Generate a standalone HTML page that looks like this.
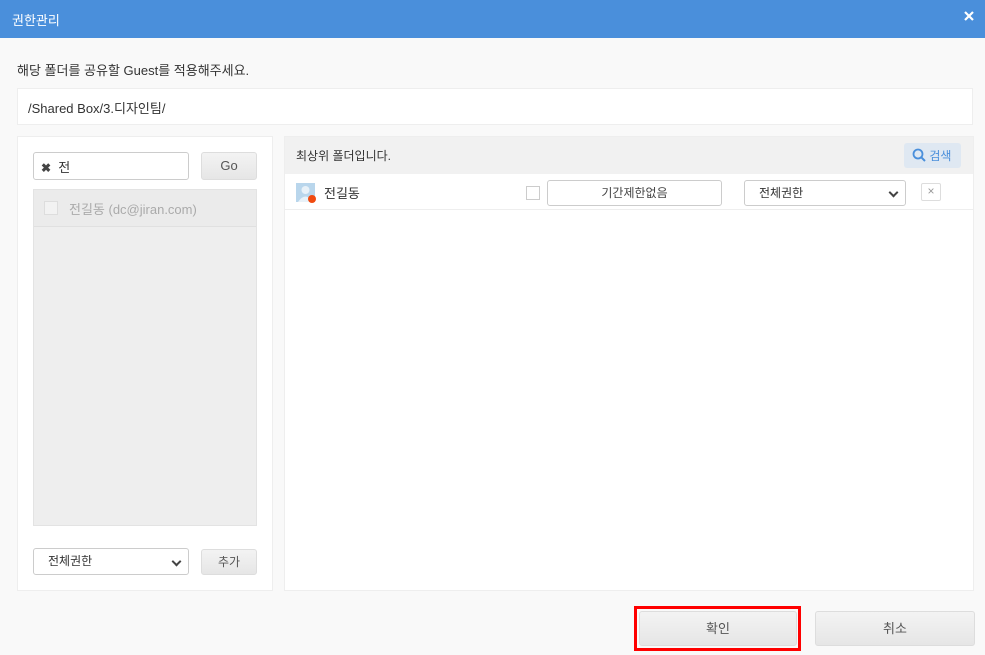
<!DOCTYPE html>
<html><head><meta charset="utf-8"><style>
*{box-sizing:border-box;margin:0;padding:0}
body{width:985px;height:655px;background:#f9f9f9;font-family:"Liberation Sans","Noto Sans CJK KR",sans-serif;font-size:13px;color:#333;position:relative;overflow:hidden}
.a{position:absolute}
.btn{position:absolute;border:1px solid #ddd;border-radius:3px;background:linear-gradient(#f3f3f3,#e6e6e6);color:#555;text-align:center}
.sel{position:absolute;border:1px solid #ccc;border-radius:3px;background:#fff;padding-left:14px;color:#333}
.sel:after{content:"";position:absolute;right:8px;top:50%;margin-top:-4px;width:5px;height:5px;border-right:2px solid #444;border-bottom:2px solid #444;transform:rotate(45deg)}
</style></head><body>
<div class="a" style="left:0;top:0;width:985px;height:38px;background:#4a8fdb"></div>
<div class="a" style="left:12px;top:10px;color:#fff;font-size:13px">권한관리</div>
<svg class="a" style="left:964px;top:11px" width="10" height="10"><path d="M1 1L9 9M9 1L1 9" stroke="#fff" stroke-width="2.2"/></svg>
<div class="a" style="left:17px;top:60px;font-size:13px;color:#333">해당 폴더를 공유할 Guest를 적용해주세요.</div>
<div class="a" style="left:17px;top:88px;width:956px;height:37px;background:#fff;border:1px solid #eee;padding:9px 10px;font-size:13px">/Shared Box/3.디자인팀/</div>

<div class="a" style="left:17px;top:136px;width:256px;height:455px;background:#fff;border:1px solid #eee"></div>
<div class="a" style="left:33px;top:152px;width:156px;height:28px;border:1px solid #ccc;border-radius:3px;background:#fff;padding:4px 0 0 7px;font-size:13px"><span style="font-size:12px;font-weight:bold;color:#444">✖</span>&nbsp;&nbsp;전</div>
<div class="btn" style="left:201px;top:152px;width:56px;height:28px;line-height:26px">Go</div>
<div class="a" style="left:33px;top:189px;width:224px;height:337px;background:#eeeeee;border:1px solid #e3e3e3"></div>
<div class="a" style="left:34px;top:190px;width:222px;height:37px;background:#ebebeb;border-bottom:1px solid #e0e0e0"></div>
<div class="a" style="left:44px;top:201px;width:14px;height:14px;border:1px solid #ddd;background:#f2f2f2"></div>
<div class="a" style="left:69px;top:199px;color:#aaa;font-size:13px">전길동 (dc@jiran.com)</div>
<div class="sel" style="left:33px;top:548px;width:156px;height:27px;line-height:25px;font-size:12px">전체권한</div>
<div class="btn" style="left:201px;top:549px;width:56px;height:26px;line-height:24px;font-size:12px">추가</div>

<div class="a" style="left:284px;top:136px;width:690px;height:455px;background:#fff;border:1px solid #eee"></div>
<div class="a" style="left:285px;top:137px;width:688px;height:37px;background:#f1f1f1"></div>
<div class="a" style="left:296px;top:147px;font-size:12px;color:#333">최상위 폴더입니다.</div>
<div class="a" style="left:904px;top:143px;width:57px;height:25px;background:#dfe8f2;border-radius:3px;color:#4a8fdb;padding:4px 0 0 8px;font-size:12px"><svg width="14" height="14" viewBox="0 0 14 14" style="vertical-align:-2px"><circle cx="6" cy="6" r="4.5" fill="none" stroke="#4a8fdb" stroke-width="1.8"/><path d="M9.3 9.3L13 13" stroke="#4a8fdb" stroke-width="2"/></svg> 검색</div>
<div class="a" style="left:285px;top:209px;width:688px;height:1px;background:#eee"></div>
<div class="a" style="left:296px;top:183px;width:19px;height:19px;background:#b9d6ec"><svg width="19" height="19"><circle cx="9.5" cy="7" r="4" fill="#e8f1f8"/><path d="M2 19Q9.5 8 17 19Z" fill="#e8f1f8"/></svg></div>
<div class="a" style="left:308px;top:195px;width:8px;height:8px;border-radius:50%;background:#f04a10"></div>
<div class="a" style="left:324px;top:183px;font-size:13px">전길동</div>
<div class="a" style="left:526px;top:186px;width:14px;height:14px;border:1px solid #ccc;background:#fff"></div>
<div class="a" style="left:547px;top:180px;width:175px;height:26px;border:1px solid #ccc;border-radius:3px;text-align:center;line-height:24px;font-size:12px;color:#444">기간제한없음</div>
<div class="sel" style="left:744px;top:180px;width:162px;height:26px;line-height:24px;font-size:12px">전체권한</div>
<div class="a" style="left:921px;top:183px;width:20px;height:18px;border:1px solid #ddd;border-radius:2px;text-align:center;line-height:15px;color:#999;font-size:12px">×</div>

<div class="a" style="left:634px;top:606px;width:167px;height:45px;border:3px solid #f00"></div>
<div class="btn" style="left:639px;top:611px;width:158px;height:35px;line-height:33px;font-size:13px">확인</div>
<div class="btn" style="left:815px;top:611px;width:160px;height:35px;line-height:33px;font-size:13px">취소</div>
</body></html>
